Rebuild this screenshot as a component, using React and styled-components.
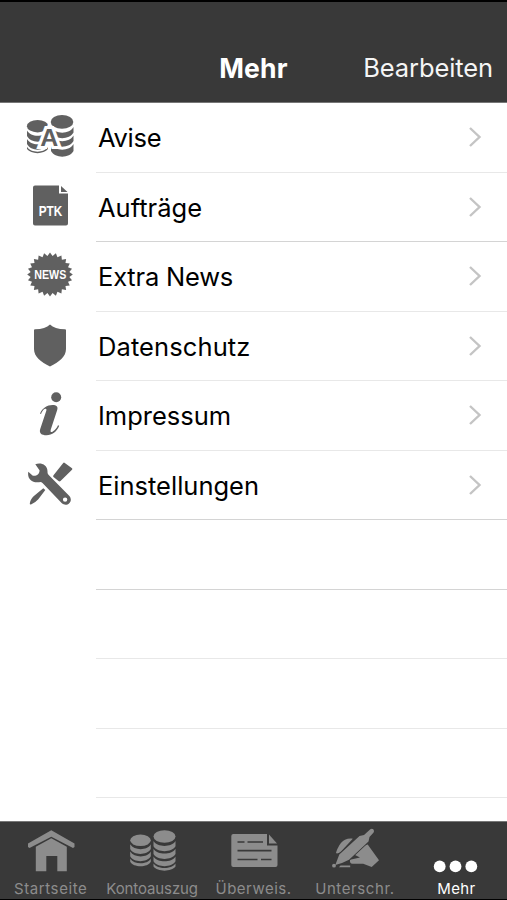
import styled, { createGlobalStyle } from "styled-components";

const menuItems = [
  { label: "Avise", icon: AdviceIcon, spacing: "-0.3px" },
  { label: "Aufträge", icon: OrdersIcon, spacing: "0px" },
  { label: "Extra News", icon: NewsIcon, spacing: "-0.2px" },
  { label: "Datenschutz", icon: ShieldIcon, spacing: "0.1px" },
  { label: "Impressum", icon: InfoIcon, spacing: "0px" },
  { label: "Einstellungen", icon: ToolsIcon, spacing: "0px" },
];

const tabs = [
  { label: "Startseite", icon: HomeIcon, spacing: "0.6px" },
  { label: "Kontoauszug", icon: CoinsIcon, spacing: "-0.1px" },
  { label: "Überweis.", icon: TransferIcon, spacing: "0.5px" },
  { label: "Unterschr.", icon: SignIcon, spacing: "0.6px" },
  { label: "Mehr", icon: DotsIcon, spacing: "0.3px", active: true },
];

export default function App() {
  return (
    <Screen>
      <GlobalStyle />
      <Header>
        <Title>Mehr</Title>
        <EditButton>Bearbeiten</EditButton>
      </Header>
      <List>
        {menuItems.map(({ label, icon: Icon, spacing }, i) => (
          <Row key={label}>
            <Icon />
            <RowBody $dark={i === 1 || i === 5}>
              <RowLabel $spacing={spacing}>{label}</RowLabel>
              <Chevron viewBox="0 0 14 22">
                <path d="M2 2l9.5 9L2 20" />
              </Chevron>
            </RowBody>
          </Row>
        ))}
        {[0, 1, 2, 3].map((n) => (
          <Row key={n}>
            <RowBody $dark={n === 0} />
          </Row>
        ))}
      </List>
      <TabBar>
        {tabs.map(({ label, icon: Icon, spacing, active }) => (
          <Tab key={label} $active={active}>
            <Icon />
            <TabLabel $spacing={spacing}>{label}</TabLabel>
          </Tab>
        ))}
      </TabBar>
    </Screen>
  );
}

function AdviceIcon() {
  return (
    <RowIcon viewBox="0 0 48 48">
      <ellipse cx="11.6" cy="14.2" rx="10.7" ry="6.2" />
      <ellipse cx="36" cy="9.900" rx="11.300" ry="6.800" />
      <path d="M1 18.500c4 7 17 7 21 0v5.500c-4 7.500-17 7.500-21 0zM1 27c4 7 17 7 21 0v5c-4 7.500-17 7.500-21 0zM1 34.800c4 6.500 17 6.500 21 0v2.200c-4 5.500-17 5.500-21 0z" />
      <path d="M25 15c4 7.500 18.500 7.500 22.500 0v5.500c-4 7.500-18.500 7.500-22.500 0zM25 23.500c4 7.500 18.500 7.500 22.500 0v5.500c-4 7.500-18.500 7.500-22.500 0zM25 32c4 7.500 18.500 7.500 22.500 0v7c-4 7.500-18.500 7.500-22.500 0z" />
      <Letter x="23.3" y="33.8" $size="23px" $outline textLength="18" lengthAdjust="spacingAndGlyphs">A</Letter>
    </RowIcon>
  );
}

function OrdersIcon() {
  return (
    <RowIcon viewBox="0 0 48 48">
      <path d="M9 3.500h24v8h9V41.500a2 2 0 0 1-2 2H9a2 2 0 0 1-2-2v-36a2 2 0 0 1 2-2z" />
      <path d="M35 4l6.500 6H35z" />
      <Letter x="24.500" y="34" $size="14.5px" $white textLength="23.5" lengthAdjust="spacingAndGlyphs">PTK</Letter>
    </RowIcon>
  );
}

function NewsIcon() {
  // starburst with 24 teeth
  const points = Array.from({ length: 48 }, (_, i) => {
    const r = i % 2 ? 19.5 : 22.8;
    const a = (i * Math.PI) / 24 - Math.PI / 2;
    return `${24 + r * Math.cos(a)},${23.5 + r * Math.sin(a) * 0.96}`;
  }).join(" ");
  return (
    <RowIcon viewBox="0 0 48 48">
      <polygon points={points} />
      <Letter x="24.300" y="28" $size="13px" $white textLength="32" lengthAdjust="spacingAndGlyphs">NEWS</Letter>
    </RowIcon>
  );
}

function ShieldIcon() {
  return (
    <RowIcon viewBox="0 0 48 48">
      <path d="M24 3.500c3 3 8 4.700 15 4.800q1 0 1 1V28c0 8-7 13-16 17.500C15 41 8 36 8 28V9.300q0-1 1-1C16 8.200 21 6.500 24 3.500z" />
    </RowIcon>
  );
}

function InfoIcon() {
  return (
    <RowIcon viewBox="0 0 48 48">
      <circle cx="30.2" cy="7.2" r="5" />
      <path d="M14 23.500c2.500-5.500 7-8.500 12.500-8.500 4 0 5.800 1.700 4.700 5L24.800 39.500c-.8 2.500.5 3.300 2 2 2.500-1.500 4-3.500 5.200-6.200l1.200.5c-2.500 6-7 9.500-12.700 9.500-5 0-7.700-2-6.200-6.500l6-18c.6-2-.5-2.600-1.800-1.700-1.500 1-2.500 2.500-3.500 4.900z" />
    </RowIcon>
  );
}

function ToolsIcon() {
  return (
    <RowIcon viewBox="0 0 48 48">
      <path d="M37.200 2.900q.8-.8 1.600 0l7.200 5.300q.8.700 0 1.500L34.500 21q-1 .8-2 0l-5-4q-.8-.8 0-1.700z" />
      <path d="M17.300 28.300l2 1.800-7 9.200q-2.500 3-7.300 5.200-1.400.2-1.200-1.200.7-4.500 5-8z" />
      <path
        fillRule="evenodd"
        d="M9.300 4.300C14.500 2.200 22 4.500 21.500 12.300q0 1.500 1.200 2.700l20.200 20.500c5.500 5.500-2 12.500-7.300 7.500L16.500 23q-1.200-1.200-3.300-.8C6 23.300 1 18.500 2.300 11.800l4.200 3.700c3 1.300 7.300-1.200 7-5.200zM41.300 39.600a2.200 2.200 0 1 0-4.400 0 2.200 2.200 0 0 0 4.400 0z"
      />
    </RowIcon>
  );
}

function HomeIcon() {
  return (
    <TabIcon viewBox="0 0 48 48">
      <path d="M24.300 4.300L47.500 17.500V21l-1.500 1L24.300 10.700 2.500 22 1 21v-3.500z" />
      <path d="M24.300 12.300l15.500 8.500v24.400h-9.500V30h-11v15.200h-10.500V20.800z" />
    </TabIcon>
  );
}

function CoinsIcon() {
  return (
    <TabIcon viewBox="0 0 48 48">
      <ellipse cx="12.500" cy="14.300" rx="10.300" ry="5.800" />
      <ellipse cx="36.500" cy="10.500" rx="11" ry="6.200" />
      <path d="M2.200 18.300c4 6.500 17 6.500 20.600 0v4.800c-4 6.500-17 6.500-20.600 0zM2.200 25.500c4 6.500 17 6.500 20.600 0v4.800c-4 6.500-17 6.500-20.600 0zM2.200 32.700c4 6 17 6 20.600 0v3c-3 6-17.500 6-20.600 0z" />
      <path d="M25.500 15c4 6.500 18 6.500 22 0v5.300c-4 6.500-18 6.500-22 0zM25.500 22.700c4 6.500 18 6.500 22 0V28c-4 6.500-18 6.500-22 0zM25.500 30.400c4 6.500 18 6.500 22 0v4.900c-4 6.500-18 6.500-22 0zM25.500 37.600c4 6 18 6 22 0v3c-4 5.500-18 5.500-22 0z" />
    </TabIcon>
  );
}

function TransferIcon() {
  return (
    <TabIcon viewBox="0 0 48 48">
      <path d="M3 8h34v11.500h10.500V39a2 2 0 0 1-2 2H3.300a2 2 0 0 1-2-2V10a2 2 0 0 1 2-2z" />
      <path d="M39 8.500l8 9h-8z" />
      <path stroke="#393939" strokeWidth="1.700" d="M7.500 16h7M17.500 16h15.500M7.500 24.700h34M7.500 33.500h20M31 33.500h10.500" />
    </TabIcon>
  );
}

function SignIcon() {
  return (
    <TabIcon viewBox="0 0 48 48">
      <path d="M5 26.800c1.500-4.500 4.500-11 9-13 2.500-1.300 5.500-1.600 7.800-1L10 25.500c-2 1.800-4.700 2.500-5 1.300z" />
      <path d="M28 21l8.700-2.500L48 34.200 40.700 41l-8.500-3.200H21.500q-3-.2-2.500-4l10-2.300-6-3z" />
      <path stroke="#393939" strokeWidth="1.6" paintOrder="stroke" d="M39.300 3.300q1.500-1.200 3 0 1.400 1.700.3 3.200L38.500 11l-1 4.500L18 33.800 11 37l-6.700 2 4-10.500L28.500 10l4.500-1z" />
      <circle cx="3" cy="39.700" r="1.900" />
      <path d="M9.500 39.600h9.700v1.700H8z" />
    </TabIcon>
  );
}

function DotsIcon() {
  return (
    <TabIcon viewBox="0 0 48 48">
      <circle cx="7.700" cy="40.400" r="5.900" />
      <circle cx="23.500" cy="40.400" r="5.900" />
      <circle cx="39.300" cy="40.400" r="5.900" />
    </TabIcon>
  );
}

const GlobalStyle = createGlobalStyle`
  body {
    margin: 0;
    background: #fff;
    font-family: Inter, "Liberation Sans", sans-serif;
  }
`;

const Screen = styled.div`
  box-sizing: border-box;
  display: flex;
  flex-direction: column;
  width: 507px;
  height: 900px;
  overflow: hidden;
  border-top: 2px solid #000;
  border-bottom: 1px solid #000;
`;

const Header = styled.header`
  box-sizing: border-box;
  display: grid;
  grid-template-columns: 1fr auto 1fr;
  align-items: end;
  flex: none;
  height: 101px;
  padding: 0 14px 18px;
  background: #393939;
  border-bottom: 1px solid #777;
  color: #fff;
  line-height: 32px;
`;

const Title = styled.h1`
  grid-column: 2;
  margin: 0;
  font-size: 26.5px;
  font-weight: 700;
  line-height: 32px;
  letter-spacing: 0.2px;
`;

const EditButton = styled.button`
  justify-self: end;
  padding: 0;
  border: 0;
  background: none;
  color: #f5f5f5;
  font: inherit;
  font-size: 25.5px;
  line-height: 32px;
  letter-spacing: -0.1px;
`;

const List = styled.div`
  flex: 1;
  min-height: 0;
  overflow: hidden;
  background: #fff;
`;

const Row = styled.div`
  display: flex;
  height: 69.5px;
  padding-left: 26px;
  justify-content: flex-end;
`;

const RowIcon = styled.svg`
  flex: none;
  width: 48px;
  height: 48px;
  margin: 9px 22px 0 0;
  fill: #606060;
`;

const RowBody = styled.div`
  box-sizing: border-box;
  display: flex;
  align-items: center;
  justify-content: space-between;
  width: 411px;
  padding: 0 25px 0 2px;
  border-bottom: 1px solid ${(p) => (p.$dark ? "#d4d4d4" : "#e8e8e8")};
`;

const RowLabel = styled.span`
  padding-top: 2px;
  color: #000;
  font-size: 25.5px;
  line-height: 32px;
  letter-spacing: ${(p) => p.$spacing};
`;

const Chevron = styled.svg`
  width: 14px;
  height: 22px;
  fill: none;
  stroke: #c4c4c4;
  stroke-width: 2.4;
`;

const Letter = styled.text`
  font-family: "Liberation Sans", sans-serif;
  font-size: ${(p) => p.$size};
  font-weight: 700;
  text-anchor: middle;
  fill: ${(p) => (p.$white ? "#fff" : "#606060")};
  stroke: ${(p) => (p.$outline ? "#fff" : "none")};
  stroke-width: 6px;
  paint-order: stroke;
`;

const TabBar = styled.nav`
  box-sizing: border-box;
  display: flex;
  flex: none;
  height: 78px;
  background: #393939;
  border-top: 1px solid #777;
`;

const Tab = styled.div`
  display: flex;
  flex: 1;
  flex-direction: column;
  align-items: center;
  padding-top: 4px;
  color: ${(p) => (p.$active ? "#fff" : "#8c8c8c")};
`;

const TabIcon = styled.svg`
  flex: none;
  width: 48px;
  height: 48px;
  fill: currentColor;
`;

const TabLabel = styled.span`
  margin-top: 5px;
  font-size: 15px;
  line-height: 19px;
  letter-spacing: ${(p) => p.$spacing};
  white-space: nowrap;
`;
